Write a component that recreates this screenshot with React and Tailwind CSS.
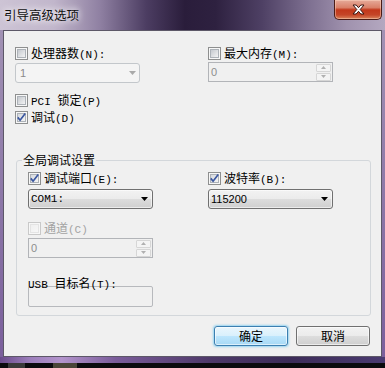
import React from "react";

const CJK = "font-['Noto_Sans_CJK_SC','Liberation_Sans',sans-serif]";
const MONO = "font-['Liberation_Mono','Noto_Sans_CJK_SC',monospace]";
const SANS = "font-['Liberation_Sans','Noto_Sans_CJK_SC',sans-serif]";

function CheckBox({ checked = false, disabled = false }) {
  const id = checked ? "cbc" : disabled ? "cbd" : "cbu";
  return (
    <svg width="13" height="13" viewBox="0 0 13 13" className="block shrink-0">
      <defs>
        <linearGradient id={id} x1="0" y1="0" x2="1" y2="1">
          <stop offset="0" stopColor={disabled ? "#efefef" : checked ? "#d4d7dc" : "#c2c6cc"} />
          <stop offset="1" stopColor={disabled ? "#f7f7f7" : "#f6f6f6"} />
        </linearGradient>
      </defs>
      <rect x="0.5" y="0.5" width="12" height="12" fill="#f7f7f7" stroke={disabled ? "#c9c9c9" : "#8e8f8f"} />
      <rect x="2.5" y="2.5" width="8" height="8" fill={`url(#${id})`} stroke={disabled ? "#e4e4e4" : "#adb2b8"} />
      {checked && (
        <path d="M2.8 6.4 L5.1 9.2 L10.2 2.6" fill="none" stroke="#3a56a0" strokeWidth="1.7" />
      )}
    </svg>
  );
}

function Label({ pre, cn, en, disabled = false }) {
  return (
    <span
      className={
        "whitespace-nowrap text-[12px] leading-[14px] " +
        (disabled ? "text-[#a3a3a3]" : "text-black")
      }
    >
      {pre && <span className={MONO + " text-[11px]"}>{pre}</span>}
      <span className={CJK}>{cn}</span>
      <span className={MONO + " text-[11px]"}>{en}</span>
    </span>
  );
}

function CheckRow({ checked, disabled, pre, cn, en }) {
  return (
    <div className="flex h-[13px] items-center gap-[3px]">
      <CheckBox checked={checked} disabled={disabled} />
      <Label pre={pre} cn={cn} en={en} disabled={disabled} />
    </div>
  );
}

function DisabledSelect({ value }) {
  return (
    <div className="flex h-[20px] w-[125px] items-center justify-between rounded-[3px] border border-[#c3c7cb] bg-[#f4f4f4] pl-[4px] pr-[3px]">
      <span className={SANS + " text-[11px] leading-[14px] text-[#8a8a8a]"}>{value}</span>
      <svg width="7" height="4" viewBox="0 0 7 4" className="block">
        <path d="M0 0 H7 L3.5 4 Z" fill="#a9a9a9" />
      </svg>
    </div>
  );
}

function Combo({ value, mono }) {
  return (
    <div className="flex h-[20px] w-[125px] items-center justify-between rounded-[3px] border border-[#707070] bg-[linear-gradient(180deg,#f2f2f2_0%,#ebebeb_50%,#dddddd_50%,#cfcfcf_100%)] pl-[2px] pr-[4px] shadow-[inset_0_0_0_1px_rgba(255,255,255,0.6)]">
      <span className={(mono ? MONO : SANS) + " text-[11px] leading-[14px] text-black"}>
        {value}
      </span>
      <svg width="7" height="4" viewBox="0 0 7 4" className="block">
        <path d="M0 0 H7 L3.5 4 Z" fill="#000" />
      </svg>
    </div>
  );
}

function Spinner({ value }) {
  return (
    <div className="flex h-[20px] w-[125px] items-center justify-between border border-[#b2b4b8] bg-[#f0f0f0] pl-[2px] pr-[1px]">
      <span className={SANS + " text-[11px] leading-[14px] text-[#8d8d8d]"}>{value}</span>
      <div className="flex flex-col gap-[1px]">
        <div className="flex h-[8px] w-[15px] items-center justify-center rounded-[1px] border border-[#d6d6d6] bg-[#f4f4f4]">
          <svg width="5" height="3" viewBox="0 0 5 3" className="block">
            <path d="M0 3 H5 L2.5 0 Z" fill="#b0b0b0" />
          </svg>
        </div>
        <div className="flex h-[8px] w-[15px] items-center justify-center rounded-[1px] border border-[#d6d6d6] bg-[#f4f4f4]">
          <svg width="5" height="3" viewBox="0 0 5 3" className="block">
            <path d="M0 0 H5 L2.5 3 Z" fill="#b0b0b0" />
          </svg>
        </div>
      </div>
    </div>
  );
}

export default function App() {
  return (
    <div className="h-[368px] w-[385px] overflow-hidden bg-[#0b0b0e]">
      <div className="flex h-[363px] w-[385px] flex-col bg-[linear-gradient(180deg,#a596b6_0%,#8a74a6_60%,#7a5e9c_100%)]">
        {/* title bar */}
        <div className="flex h-[30px] shrink-0 items-start bg-[linear-gradient(90deg,#cdc4d5_0%,#c1b6cb_14%,#8f80a2_26%,#4c3d62_38%,#2a1d3b_48%,#2e2140_56%,#4e4064_68%,#7d6f90_80%,#a092ae_90%,#b4a8c0_100%)]">
          <span
            className={
              CJK +
              " ml-[4px] mt-[7px] text-[12.5px] leading-[16px] text-[#111] [text-shadow:0_0_6px_rgba(255,255,255,0.95),0_0_10px_rgba(255,255,255,0.8)]"
            }
          >
            引导高级选项
          </span>
          <div className="ml-auto mr-[3px] flex h-[20px] w-[48px] items-center justify-center rounded-b-[5px] border border-t-0 border-[#4b1c16] bg-[linear-gradient(180deg,#e6ab9a_0%,#d98068_40%,#c2381b_52%,#c54527_78%,#d9845c_100%)] shadow-[inset_0_0_0_1px_rgba(255,220,200,0.45)]">
            <svg width="13" height="11" viewBox="0 0 13 11" className="block">
              <path
                d="M1 1 H4.2 L6.5 3.7 L8.8 1 H12 L8.2 5.5 L12 10 H8.8 L6.5 7.3 L4.2 10 H1 L4.8 5.5 Z"
                fill="#ffffff"
                stroke="#3a1612"
                strokeWidth="1"
                strokeLinejoin="round"
              />
            </svg>
          </div>
        </div>

        {/* client */}
        <div className="mx-[3px] h-[327px] shrink-0 border border-[#5d5868] bg-[#f0f0f0]">
          <div className="pl-[11px] pt-[16px]">
            <div className="flex">
              <div className="flex w-[193px] flex-col">
                <CheckRow cn="处理器数" en="(N):" />
                <div className="mt-[3px]">
                  <DisabledSelect value="1" />
                </div>
              </div>
              <div className="flex flex-col">
                <CheckRow cn="最大内存" en="(M):" />
                <div className="mt-[2px]">
                  <Spinner value="0" />
                </div>
              </div>
            </div>

            <div className="mt-[11px]">
              <CheckRow pre="PCI " cn="锁定" en="(P)" />
            </div>
            <div className="mt-[4px]">
              <CheckRow checked cn="调试" en="(D)" />
            </div>

            <fieldset className="ml-[1px] mt-[29px] w-[355px] rounded-[3px] border border-[#d3d7db]">
              <legend className={CJK + " ml-[5px] px-[1px] text-[12px] leading-[14px] text-black"}>
                全局调试设置
              </legend>
              <div className="pb-[8px] pl-[11px] pt-[5px]">
                <div className="flex">
                  <div className="flex w-[180px] flex-col">
                    <CheckRow checked cn="调试端口" en="(E):" />
                    <div className="mt-[4px]">
                      <Combo value="COM1:" mono />
                    </div>
                  </div>
                  <div className="flex flex-col">
                    <CheckRow checked cn="波特率" en="(B):" />
                    <div className="mt-[4px]">
                      <Combo value="115200" />
                    </div>
                  </div>
                </div>
                <div className="mt-[13px]">
                  <CheckRow disabled cn="通道" en="(C)" />
                </div>
                <div className="mt-[3px]">
                  <Spinner value="0" />
                </div>
                <div className="mt-[12px] h-[14px]">
                  <Label pre="USB " cn="目标名" en="(T):" />
                </div>
                <div className="mt-[2px] h-[21px] w-[125px] rounded-[2px] border border-[#b7b9bd] bg-[#f0f0f0]" />
              </div>
            </fieldset>
          </div>

          <div className="mt-[10px] flex justify-end gap-[8px] pr-[11px]">
            <div
              className={
                CJK +
                " flex h-[20px] w-[74px] items-center justify-center rounded-[3px] border border-[#3c7fb1] bg-[linear-gradient(180deg,#eaf6fd_0%,#d9f0fc_50%,#bee6fd_50%,#a7d9f5_100%)] text-[12px] leading-[14px] text-black shadow-[0_0_2px_1px_rgba(80,190,240,0.55),inset_0_0_0_1px_rgba(255,255,255,0.6)]"
              }
            >
              确定
            </div>
            <div
              className={
                CJK +
                " flex h-[20px] w-[74px] items-center justify-center rounded-[3px] border border-[#707070] bg-[linear-gradient(180deg,#f2f2f2_0%,#ebebeb_50%,#dddddd_50%,#cfcfcf_100%)] text-[12px] leading-[14px] text-black shadow-[inset_0_0_0_1px_rgba(255,255,255,0.6)]"
              }
            >
              取消
            </div>
          </div>
        </div>

        {/* bottom frame */}
        <div className="h-[6px] shrink-0 bg-[linear-gradient(90deg,#6b4c8c_0%,#9d7fbc_8%,#b394cc_16%,#7a5c9a_30%,#4d3868_55%,#3c2c58_75%,#4a3a70_100%)]" />
      </div>
      <div className="flex h-[5px] items-stretch gap-[3px] pl-[8px]">
        <div className="w-[17px] bg-[#3a3a3a]" />
        <div className="ml-[25px] w-[24px] bg-[#4a4538]" />
      </div>
    </div>
  );
}
